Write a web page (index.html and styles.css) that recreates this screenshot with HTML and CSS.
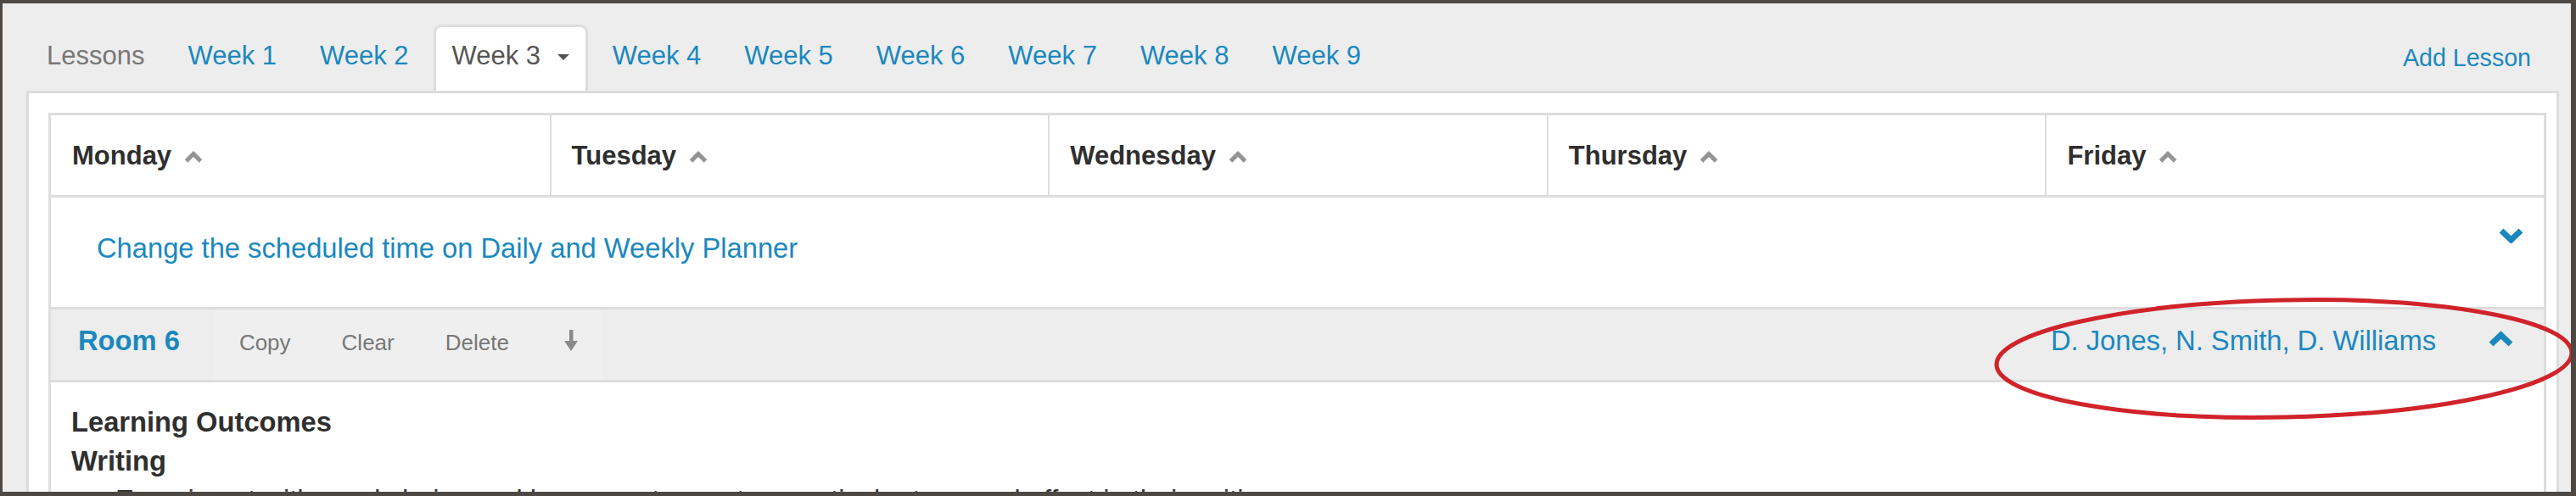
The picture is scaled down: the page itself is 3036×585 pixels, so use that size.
FILE: index.html
```html
<!DOCTYPE html>
<html lang="en">
<head>
<meta charset="utf-8">
<title>Planner</title>
<link rel="stylesheet" href="styles.css">
</head>
<body>
<div class="frame">
  <div class="page">
    <ul class="tabs">
      <li class="tab muted">Lessons</li>
      <li class="tab">Week 1</li>
      <li class="tab">Week 2</li>
      <li class="tab active">Week 3 <span class="caret"></span></li>
      <li class="tab">Week 4</li>
      <li class="tab">Week 5</li>
      <li class="tab">Week 6</li>
      <li class="tab">Week 7</li>
      <li class="tab">Week 8</li>
      <li class="tab">Week 9</li>
      <li class="tab add">Add Lesson</li>
    </ul>
    <div class="panel">
      <div class="planner">
        <div class="days">
          <div class="day">Monday<svg class="sort" viewBox="0 0 22 15"><polyline points="2.5,13 11,4.5 19.5,13"/></svg></div>
          <div class="day">Tuesday<svg class="sort" viewBox="0 0 22 15"><polyline points="2.5,13 11,4.5 19.5,13"/></svg></div>
          <div class="day">Wednesday<svg class="sort" viewBox="0 0 22 15"><polyline points="2.5,13 11,4.5 19.5,13"/></svg></div>
          <div class="day">Thursday<svg class="sort" viewBox="0 0 22 15"><polyline points="2.5,13 11,4.5 19.5,13"/></svg></div>
          <div class="day">Friday<svg class="sort" viewBox="0 0 22 15"><polyline points="2.5,13 11,4.5 19.5,13"/></svg></div>
        </div>
        <div class="lesson-row">
          <span class="link">Change the scheduled time on Daily and Weekly Planner</span>
          <svg class="chev chev-down" viewBox="0 0 29 19"><polyline points="3,4 14.5,15 26,4"/></svg>
        </div>
        <div class="room-bar">
          <span class="room">Room 6</span>
          <div class="actions">
            <span class="btn">Copy</span>
            <span class="btn">Clear</span>
            <span class="btn">Delete</span>
            <svg class="arrow" viewBox="0 0 16 25"><rect x="6" y="0" width="4.5" height="16"/><polygon points="0,13 16,13 8,25"/></svg>
          </div>
          <span class="teachers">D. Jones, N. Smith, D. Williams</span>
          <svg class="chev chev-up" viewBox="0 0 29 19"><polyline points="3,16 14.5,5 26,16"/></svg>
        </div>
        <div class="content">
          <div class="heading">Learning Outcomes</div>
          <div class="heading">Writing</div>
          <ul class="outcomes">
            <li>Experiment with word choice and language to create a particular tone and effect in their writing</li>
          </ul>
        </div>
      </div>
    </div>
  </div>
  <svg class="annotation" viewBox="0 0 700 170"><ellipse cx="352" cy="88" rx="339" ry="69" transform="rotate(-1.2 352 88)"/></svg>
</div>
</body>
</html>
```
FILE: styles.css
```css
* { box-sizing: border-box; }
html, body { margin: 0; padding: 0; }
body {
  width: 3036px;
  height: 585px;
  overflow: hidden;
  background: #4e4844;
  font-family: "Liberation Sans", Arial, Helvetica, sans-serif;
  font-size: 31px;
  color: #333;
}
.frame {
  position: relative;
  width: 3036px;
  height: 585px;
  border-style: solid;
  border-color: #4e4844;
  border-width: 4px 6px 5px 3px;
  background: #ededed;
  overflow: hidden;
}
.page {
  padding: 25px 14px 0 28px;
}
.tabs {
  display: flex;
  list-style: none;
  margin: 0;
  padding: 0 0 0 2px;
  height: 78px;
}
.tab {
  border: 3px solid transparent;
  border-bottom: 0;
  border-radius: 9px 9px 0 0;
  padding: 12px 19px 19px;
  margin-right: 7px;
  line-height: 44px;
  color: #1a88bf;
  white-space: nowrap;
}
.tab.muted { color: #777; }
.tab.active {
  background: #fff;
  border-color: #ddd;
  color: #555;
}
.caret {
  display: inline-block;
  width: 0;
  height: 0;
  margin-left: 11px;
  vertical-align: middle;
  border-top: 7px solid #555;
  border-left: 7px solid transparent;
  border-right: 7px solid transparent;
}
.tab.add {
  margin-left: auto;
  margin-right: 0;
  font-size: 28.6px;
  padding: 14px 30px 17px 19px;
}
.panel {
  background: #fff;
  border: 3px solid #dcdcdc;
  border-bottom: 0;
  padding: 23px 12px 0 23px;
  height: 520px;
}
.planner {
  border: 3px solid #dddddd;
  border-bottom: 0;
  height: 500px;
}
.days {
  display: grid;
  grid-template-columns: repeat(5, 1fr);
  border-bottom: 3px solid #dddddd;
}
.day {
  padding: 26px 24px 24px;
  line-height: 44px;
  font-weight: bold;
  color: #2f2f2f;
  border-left: 2px solid #dddddd;
  white-space: nowrap;
}
.day:first-child { border-left: 0; padding-left: 25px; }
.sort {
  width: 22px;
  height: 15px;
  margin-left: 15px;
  vertical-align: 2px;
}
.sort polyline {
  fill: none;
  stroke: #939393;
  stroke-width: 5;
}
.lesson-row {
  display: flex;
  justify-content: space-between;
  align-items: flex-start;
  padding: 38px 24px 47px 54px;
  line-height: 44px;
  font-size: 32.7px;
  border-bottom: 3px solid #dddddd;
}
.link { color: #1a88bf; }
.chev {
  width: 29px;
  height: 19px;
  flex: none;
}
.chev polyline {
  fill: none;
  stroke: #1a88bf;
  stroke-width: 7;
}
.chev-down { margin-top: -3px; }
.room-bar {
  display: flex;
  align-items: baseline;
  background: #ededed;
  border-bottom: 3px solid #dddddd;
  padding: 15px 36px 22px 32px;
  line-height: 44px;
  font-size: 32.7px;
}
.room {
  color: #1a88bf;
  font-weight: bold;
}
.actions {
  display: flex;
  align-items: baseline;
  margin-left: 40px;
  padding-right: 30px;
  background: #efefef;
  margin-top: -15px;
  margin-bottom: -22px;
  padding-top: 15px;
  padding-bottom: 22px;
}
.btn {
  font-size: 26px;
  color: #777;
  padding: 0 30px;
}
.arrow {
  width: 16px;
  height: 25px;
  margin-left: 35px;
  align-self: flex-start;
  margin-top: 7px;
  fill: #8a8a8a;
}
.teachers {
  margin-left: auto;
  color: #1a88bf;
}
.chev-up {
  margin-left: 62px;
  align-self: flex-start;
  margin-top: 10px;
}
.content {
  padding: 24px 24px 0 24px;
  line-height: 46px;
  font-size: 32.7px;
}
.heading {
  font-weight: bold;
  color: #2f2f2f;
}
.outcomes {
  margin: 0;
  padding-left: 52px;
  color: #333;
}
.annotation {
  position: absolute;
  left: 2337px;
  top: 331px;
  width: 700px;
  height: 170px;
  overflow: visible;
}
.annotation ellipse {
  fill: none;
  stroke: #d0232a;
  stroke-width: 5;
}
```
